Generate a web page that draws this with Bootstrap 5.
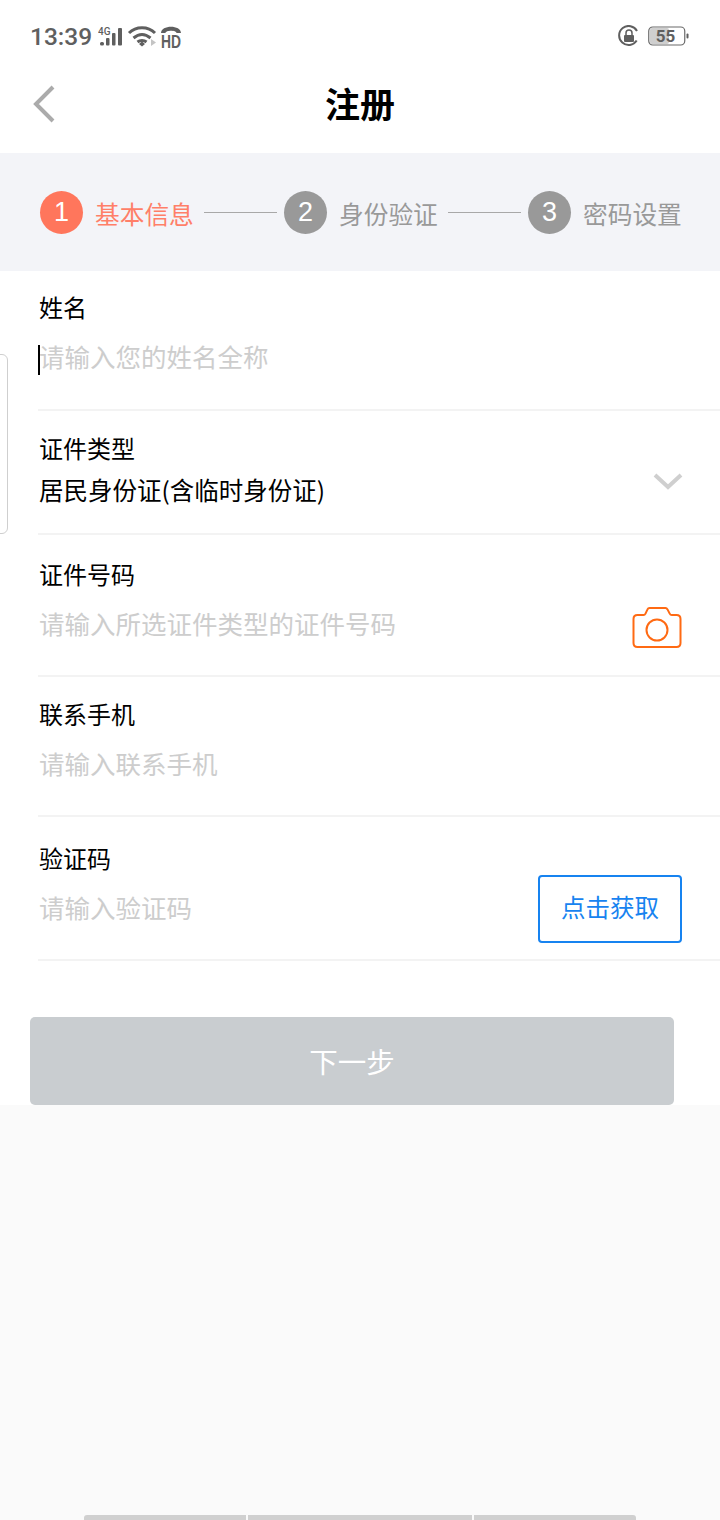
<!DOCTYPE html>
<html lang="zh-CN">
<head>
<meta charset="utf-8">
<title>注册</title>
<link rel="stylesheet" href="https://cdn.jsdelivr.net/npm/bootstrap@5.3.0/dist/css/bootstrap.min.css">
<style>
html,body{height:100%}
body{width:720px;height:1520px;overflow:hidden;background:#fafafa;font-family:"Noto Sans CJK SC","Noto Sans",sans-serif;color:#000}
.sheet{background:#fff;height:1105px;position:relative}
.statusbar{height:68px;padding:0 30px 0 30px;color:#5f5f5f}
.clock{font-family:Roboto,sans-serif;font-size:24.5px;font-weight:500;letter-spacing:0;line-height:1;margin-top:6px}
.statusicons{margin-top:12px;margin-left:6px}
.topbar{height:85px;position:relative}
.topbar h1{font-size:35px;font-weight:700;margin:0;line-height:1;position:relative;top:-8px}
.backlink{position:absolute;left:32px;top:16px;line-height:0}
.stepper{height:118px;background:#f3f4f8;padding:0 38px 0 40px;color:#999}
.stepnum{width:43px;height:43px;border-radius:50%;background:#999;color:#fff;font-family:"Liberation Sans",sans-serif;font-size:27px;line-height:43px;text-align:center;flex:none}
.steptext{font-size:24.7px;line-height:1;margin-left:12px;white-space:nowrap;padding-top:2px;width:98px}
.stepline{width:73px;height:1px;background:#a8a8a8;margin:0 7px 0 11px;flex:none}
.stepnow .stepnum{background:#ff765c}
.stepnow .steptext{color:#ff7f68}
.fieldrow{margin-left:38px;padding-left:1px;padding-right:38px;border-bottom:2px solid #f3f3f3;position:relative}
.fieldname{font-size:24px;line-height:32px}
.hint{font-size:25.5px;line-height:34px;color:#cdcdcd;white-space:nowrap}
.val{font-size:24.5px;line-height:32px}
.caret-mark{position:absolute;left:0;top:74px;width:2px;height:30px;background:#000}
.r1{height:140px;padding-top:20px}
.r1 .hint{margin-top:16px}
.r2{height:124px;padding-top:21px}
.r2 .val{margin-top:10px}
.r3{height:142px;padding-top:23px}
.r3 .hint{margin-top:16px}
.r4{height:140px;padding-top:21px}
.r4 .hint{margin-top:16px}
.r5{height:144px;padding-top:25px}
.r5 .hint{margin-top:16px}
.fieldicon{position:absolute;line-height:0}
.i-chev{right:37px;top:62px}
.i-cam{right:38px;top:71px}
.codebtn{position:absolute;right:38px;top:58px;width:144px;height:68px;border:2px solid #1783f0;border-radius:4px;background:#fff;color:#1783f0;font-size:24.5px;padding:0 0 4px;line-height:1}
.nextbtn{display:block;position:relative;margin:56px 0 0 30px;width:644px;height:88px;background:#c9cdd0;border:0;border-radius:5px;color:#fff;font-size:28.5px;padding:0;line-height:88px}
.sidetab{position:absolute;left:-12px;top:354px;width:20px;height:180px;border:1px solid #cfcfcf;border-radius:6px;background:#fff}
.homebar{position:absolute;left:84px;bottom:0;height:5px;display:flex;gap:2px}
.homebar span{display:block;height:5px;background:#d0d0d0}
.hb1{width:162px;border-radius:3px 0 0 0}
.hb2{width:224px}
.hb3{width:162px;border-radius:0 3px 0 0}
</style>
</head>
<body>
<div class="sheet">
  <div class="statusbar d-flex align-items-center">
    <div class="clock">13:39</div>
    <svg class="statusicons" width="86" height="32" viewBox="0 0 86 32" aria-hidden="true">
      <g fill="#5f5f5f">
        <text x="0" y="11" font-family="Roboto,sans-serif" font-size="10" font-weight="500">4G</text>
        <rect x="2" y="18" width="4" height="3.500" rx="1.500"/>
        <rect x="8" y="14" width="3.500" height="7.500" rx="1"/>
        <rect x="14" y="9" width="3.500" height="12.500" rx="1"/>
        <rect x="20" y="4" width="4" height="17.500" rx="1"/>
      </g>
      <g fill="none" stroke="#5f5f5f" stroke-width="3">
        <path d="M31 9C38 2 50 2 57 9"/>
        <path d="M35.500 14C41 9.500 47 9.500 52.500 14"/>
        <path d="M39.500 18C42 16 46 16 48.500 18"/>
      </g>
      <path d="M41 20L44 17.500L47 20L44 22.500Z" fill="#5f5f5f"/>
      <path d="M53 15V22L58 18.500Z" fill="#c4c4c4"/>
      <path d="M63 9C63 .5 83 .5 83 9L78.500 9C78.500 6 67.500 6 67.500 9Z" fill="#5f5f5f"/>
      <text transform="translate(63 23.500) scale(.77 1)" font-family="'Liberation Sans',sans-serif" font-size="18" font-weight="700" fill="#5f5f5f">HD</text>
    </svg>
    <div class="ms-auto d-flex align-items-center" style="margin-top:4px">
      <svg width="22" height="22" viewBox="0 0 22 22" aria-hidden="true">
        <path d="M18.700 15.500A9.500 9.500 0 1 1 19 6" fill="none" stroke="#5f5f5f" stroke-width="2"/>
        <path d="M16 8h5.500l-1 4.500z" fill="#fff"/>
        <rect x="6" y="10" width="10" height="7" rx="1" fill="#5f5f5f"/>
        <path d="M8 10V8a3 3 0 0 1 6 0v2" fill="none" stroke="#5f5f5f" stroke-width="1.500"/>
      </svg>
      <svg width="42" height="22" viewBox="0 0 42 22" class="ms-2" aria-hidden="true">
        <rect x=".75" y="2" width="36" height="18" rx="4" fill="#fff" stroke="#6a6a6a" stroke-width="1.200"/>
        <rect x="2" y="3" width="19" height="16" rx="2" fill="#cfcfcf"/>
        <rect x="38.500" y="8.500" width="2" height="5" rx="1" fill="#5f5f5f"/>
        <text x="17.500" y="17" text-anchor="middle" font-family="Roboto,sans-serif" font-size="17" font-weight="700" fill="#5f5f5f">55</text>
      </svg>
    </div>
  </div>
  <div class="topbar d-flex align-items-center justify-content-center">
    <a class="backlink" href="#" aria-label="返回">
      <svg width="24" height="40" viewBox="0 0 24 40" aria-hidden="true"><path d="M21 3L4 20L21 37" fill="none" stroke="#ababab" stroke-width="4"/></svg>
    </a>
    <h1>注册</h1>
  </div>
  <div class="stepper d-flex align-items-center">
    <div class="d-flex align-items-center stepnow"><div class="stepnum">1</div><div class="steptext">基本信息</div></div>
    <div class="stepline"></div>
    <div class="d-flex align-items-center"><div class="stepnum">2</div><div class="steptext">身份验证</div></div>
    <div class="stepline"></div>
    <div class="d-flex align-items-center"><div class="stepnum">3</div><div class="steptext">密码设置</div></div>
  </div>
  <div class="fieldrow r1">
    <div class="fieldname">姓名</div>
    <div class="hint">请输入您的姓名全称</div>
    <div class="caret-mark"></div>
  </div>
  <div class="fieldrow r2">
    <div class="fieldname">证件类型</div>
    <div class="val">居民身份证(含临时身份证)</div>
    <div class="fieldicon i-chev">
      <svg width="30" height="18" viewBox="0 0 30 18" aria-hidden="true"><path d="M2 2L15 14L28 2" fill="none" stroke="#cfcfcf" stroke-width="4"/></svg>
    </div>
  </div>
  <div class="fieldrow r3">
    <div class="fieldname">证件号码</div>
    <div class="hint">请输入所选证件类型的证件号码</div>
    <div class="fieldicon i-cam">
      <svg width="50" height="44" viewBox="0 0 50 44" aria-hidden="true">
        <path d="M5.500 9H11.500C12.500 9 13 8.600 13.500 7.600L15.500 3.400C15.900 2.500 16.500 2 17.500 2H33.500C34.500 2 35 2.500 35.500 3.400L37.700 7.600C38.200 8.600 38.800 9 39.800 9H44.500C47 9 48.500 10.500 48.500 13V37C48.500 39.500 47 41 44.500 41H5.500C3 41 1.500 39.500 1.500 37V13C1.500 10.500 3 9 5.500 9Z" fill="none" stroke="#ff6a13" stroke-width="2"/>
        <circle cx="25" cy="24" r="10.500" fill="none" stroke="#ff6a13" stroke-width="2"/>
      </svg>
    </div>
  </div>
  <div class="fieldrow r4">
    <div class="fieldname">联系手机</div>
    <div class="hint">请输入联系手机</div>
  </div>
  <div class="fieldrow r5">
    <div class="fieldname">验证码</div>
    <div class="hint">请输入验证码</div>
    <button type="button" class="btn codebtn">点击获取</button>
  </div>
  <button type="button" class="btn nextbtn">下一步</button>
  <div class="sidetab"></div>
</div>
<div class="homebar"><span class="hb1"></span><span class="hb2"></span><span class="hb3"></span></div>
<script src="https://cdn.jsdelivr.net/npm/bootstrap@5.3.0/dist/js/bootstrap.bundle.min.js"></script>
</body>
</html>
